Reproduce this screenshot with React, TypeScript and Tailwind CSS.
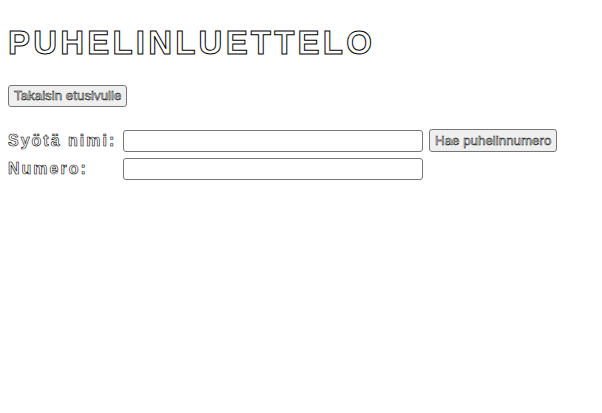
import React from "react";

export default function App() {
  return (
    <div className="min-h-[413px] bg-white px-2 font-['Liberation_Sans',Arial,sans-serif] text-black">
      <h1 className="pt-[24px] text-[33px] leading-[37px] font-bold tracking-[3.2px] text-white [-webkit-text-stroke:1px_#000]">
        PUHELINLUETTELO
      </h1>
      <div className="mt-[22px]">
        <button className="h-[22px] rounded-[3px] border border-[#767676] bg-[#efefef] px-[5px] text-[13.33px] text-white [-webkit-text-stroke:0.5px_#000]">
          Takaisin etusivulle
        </button>
      </div>
      <div className="mt-[22px] flex flex-col gap-[5px]">
        <div className="flex h-[23px] items-center">
          <label className="w-[115px] text-[16px] leading-[18px] font-bold tracking-[2px] text-white [-webkit-text-stroke:0.6px_#000]">Syötä nimi:</label>
          <input className="h-[22px] w-[300px] rounded-[3px] border border-[#767676] bg-white" />
          <button className="ml-[6px] h-[23px] rounded-[3px] border border-[#767676] bg-[#efefef] px-[5px] text-[13.33px] text-white [-webkit-text-stroke:0.5px_#000]">
            Hae puhelinnumero
          </button>
        </div>
        <div className="flex h-[23px] items-center">
          <label className="w-[115px] text-[16px] leading-[18px] font-bold tracking-[2px] text-white [-webkit-text-stroke:0.6px_#000]">Numero:</label>
          <input className="h-[22px] w-[300px] rounded-[3px] border border-[#767676] bg-white" />
        </div>
      </div>
    </div>
  );
}
